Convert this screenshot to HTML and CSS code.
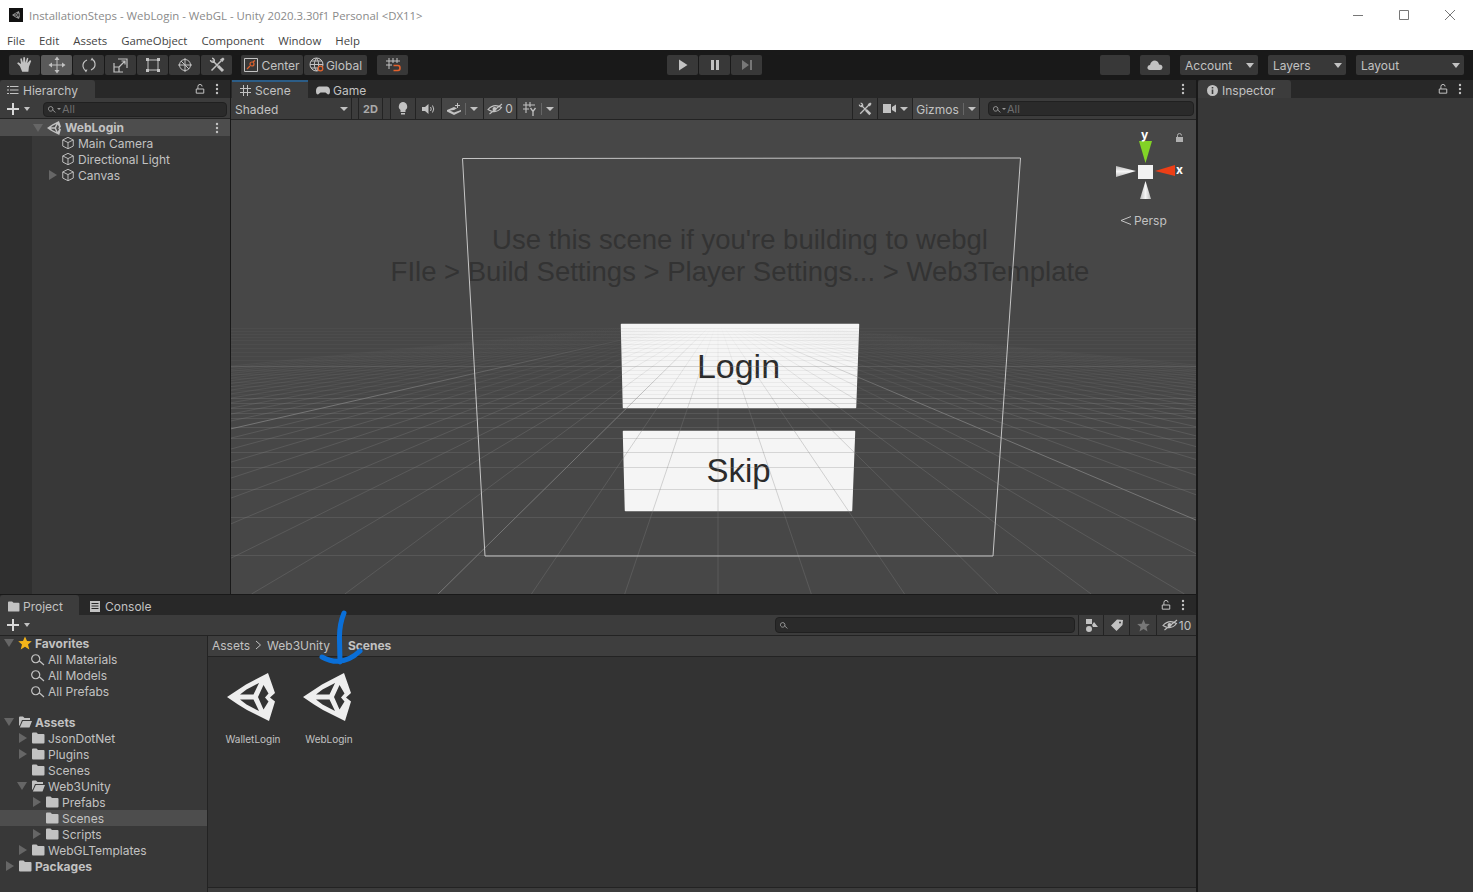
FILE: index.html
```html
<!DOCTYPE html>
<html lang="en">
<head>
  <meta charset="UTF-8" />
  <title>InstallationSteps - WebLogin - WebGL - Unity 2020.3.30f1 Personal</title>
  <link rel="stylesheet" href="styles.css">
</head>
<body>

  <!-- shared icons -->
  <svg class="defs" width="0" height="0">
    <symbol id="i-unity" viewBox="0 0 48 48">
      <path fill-rule="evenodd" d="M0 24 19 11.500 41 0 48 20 43 24.500 48 28.500 42 48 20 37 11 31.500ZM13 21.500 19.500 16.500 32 10 26.500 21.500ZM36.500 12 41.500 20.500 38 24.500 41.500 28.500 36.500 36.500 31 24ZM13 26.500H26.500L32 38 19.500 31.500Z"/>
    </symbol>
    <symbol id="i-cube" viewBox="0 0 16 16">
      <path fill="none" stroke="currentColor" stroke-width="1.100" d="M8 1.500 14 4.500V11.500L8 14.500 2 11.500V4.500ZM2 4.500 8 7.500 14 4.500M8 7.500V14.500"/>
    </symbol>
    <symbol id="i-folder" viewBox="0 0 14 12">
      <path d="M1 1.500Q1 .5 2 .5H5.500L7 2H12.500Q13.500 2 13.500 3V10.500Q13.500 11.500 12.500 11.500H2Q1 11.500 1 10.500Z"/>
    </symbol>
    <symbol id="i-folder-open" viewBox="0 0 14 12">
      <path d="M1 1.500Q1 .5 2 .5H5L6.500 2H12V4H4L1.800 9.500H1ZM4.800 5H14L11.500 11.500H1.800Z"/>
    </symbol>
    <symbol id="i-search" viewBox="0 0 14 14">
      <path fill="none" stroke="currentColor" stroke-width="1.200" d="M8.500 5.500A4 4 0 1 1 .9 5.500 4 4 0 0 1 8.500 5.500ZM7.700 8.300 13 13"/>
    </symbol>
    <symbol id="i-lock" viewBox="0 0 12 12">
      <path fill="none" stroke="currentColor" stroke-width="1.200" d="M1.500 6H10.500V11H1.500ZM3.500 6V3A2.500 2.500 0 0 1 8.500 3"/>
    </symbol>
    <symbol id="i-dots" viewBox="0 0 4 12">
      <circle cx="2" cy="2" r="1.200"/><circle cx="2" cy="6" r="1.200"/><circle cx="2" cy="10" r="1.200"/>
    </symbol>
    <symbol id="i-tools" viewBox="0 0 16 16">
      <path fill="none" stroke="currentColor" stroke-width="1.500" d="M3.500 3.500 9 9M12.500 3.500 2.500 13.500"/>
      <path fill="none" stroke="currentColor" stroke-width="3" d="M9 9 14 14"/>
      <path fill="none" stroke="currentColor" stroke-width="1.500" d="M1.500 3A2.500 2.500 0 0 0 5 5M3 1.200A2.500 2.500 0 0 1 5 5"/>
      <path d="M11 2.500 14 .5 15.500 2 13.500 5Z"/>
    </symbol>
    <symbol id="i-eye" viewBox="0 0 16 12">
      <path fill="none" stroke="currentColor" stroke-width="1.100" d="M1 6.500Q7 0 14.500 4.500 9 11.500 1 6.500ZM2.500 11 15 1"/>
      <circle cx="7.500" cy="6" r="2"/>
    </symbol>
    <symbol id="i-plus" viewBox="0 0 12 12">
      <path d="M5 0H7V5H12V7H7V12H5V7H0V5H5Z"/>
    </symbol>
  </svg>

  <div class="app">
    <header class="titlebar">
      <span class="app-icon">
        <svg width="8" height="8"><use href="#i-unity"/></svg>
      </span>
      <span class="title-text">InstallationSteps - WebLogin - WebGL - Unity 2020.3.30f1 Personal &lt;DX11&gt;</span>
      <div class="win-buttons">
        <svg class="win-btn" width="12" height="12" viewBox="0 0 12 12"><path d="M1 6.500H11"/></svg>
        <svg class="win-btn" width="12" height="12" viewBox="0 0 12 12"><path d="M1.500 1.500H10.500V10.500H1.500Z"/></svg>
        <svg class="win-btn" width="12" height="12" viewBox="0 0 12 12"><path d="M1 1 11 11M11 1 1 11"/></svg>
      </div>
    </header>

    <nav class="menubar">
      <span>File</span><span>Edit</span><span>Assets</span><span>GameObject</span><span>Component</span><span>Window</span><span>Help</span>
    </nav>

    <div class="toolbar">
      <div class="tool-group tools-left">
        <button class="tbtn"><svg width="18" height="18" viewBox="0 0 16 16"><path d="M3.500 9 1 6.500 2 5.500 4.500 7 3.800 2.500 5 2 6.300 6 6.500 1 8 1 8.300 6 9.800 1.500 11 2 10 6.500 12.500 3.500 13.500 4.500 11.500 9.500 11 14H5.500Z"/></svg></button>
        <button class="tbtn active"><svg width="18" height="18" viewBox="0 0 18 18"><path fill="none" stroke="currentColor" d="M9 3V15M3 9H15"/><path d="M9 .5 11.500 4H6.500ZM9 17.500 6.500 14H11.500ZM.5 9 4 6.500V11.500ZM17.500 9 14 11.500V6.500Z"/></svg></button>
        <button class="tbtn"><svg width="16" height="16" viewBox="0 0 16 16"><path fill="none" stroke="currentColor" stroke-width="1.200" d="M6 3Q1.500 5 2 9.500 2.500 12.500 5 14M10 13Q14.500 11 14 6.500 13.500 3.500 11 2"/><path d="M11 .5 12.500 3 9.500 3.500ZM5 15.500 3.500 13 6.500 12.500Z"/></svg></button>
        <button class="tbtn"><svg width="15" height="15" viewBox="0 0 15 15"><path fill="none" stroke="currentColor" stroke-width="1.200" d="M1 5V14H10M5 1H14V10M1 14H6V9H1M6 9 12 3M8.500 3H12V6.500"/></svg></button>
        <button class="tbtn"><svg width="14" height="14" viewBox="0 0 14 14"><path fill="none" stroke="currentColor" d="M2 2H12V12H2Z"/><path d="M0 0H3V3H0ZM11 0H14V3H11ZM0 11H3V14H0ZM11 11H14V14H11Z"/></svg></button>
        <button class="tbtn"><svg width="16" height="16" viewBox="0 0 16 16"><path fill="none" stroke="currentColor" d="M13.500 8A5.500 5.500 0 1 1 2.500 8 5.500 5.500 0 0 1 13.500 8ZM8 1V15M1 8H15M4 4 12 12"/></svg></button>
        <button class="tbtn"><svg width="16" height="16"><use href="#i-tools"/></svg></button>
      </div>

      <div class="tool-group tools-pivot">
        <button class="tbtn wide center">
          <svg width="14" height="14" viewBox="0 0 14 14"><path fill="none" stroke="#c4c4c4" d="M.5.500H13.500V13.500H.5Z"/><path fill="none" stroke="#e2622d" stroke-width="1.200" d="M3 11 6 8M10 6A2 2 0 1 1 6 6 2 2 0 0 1 10 6ZM9 4 11 2.500"/></svg>
          Center
        </button>
        <button class="tbtn wide global">
          <svg width="16" height="16" viewBox="0 0 16 16"><path fill="none" stroke="#c4c4c4" d="M14 7.500A6.500 6.500 0 1 1 1 7.500 6.500 6.500 0 0 1 14 7.500ZM7.500 1Q3 7.500 7.500 14 12 7.500 7.500 1ZM1 7.500H14M2 4H13M2 11H13"/><circle cx="11.500" cy="11.500" r="2.300" fill="#383838" stroke="#e2622d" stroke-width="1.300"/></svg>
          Global
        </button>
      </div>

      <button class="tbtn snap"><svg width="16" height="16" viewBox="0 0 16 16"><path fill="none" stroke="#c4c4c4" d="M4 1V12M8 1V6M12 1V6M1 4H15M1 8H7"/><path fill="none" stroke="#e2622d" stroke-width="1.600" d="M8.500 8.500H13Q15 8.500 15 11 15 13.500 13 13.500H8.500"/></svg></button>

      <div class="tool-group tools-play">
        <button class="tbtn"><svg width="10" height="12" viewBox="0 0 10 12"><path d="M1 .5 9.500 6 1 11.500Z"/></svg></button>
        <button class="tbtn"><svg width="10" height="12" viewBox="0 0 10 12"><path d="M1 1H4V11H1ZM6 1H9V11H6Z"/></svg></button>
        <button class="tbtn dim"><svg width="12" height="12" viewBox="0 0 12 12"><path d="M1 1 8 6 1 11ZM9 1H11V11H9Z"/></svg></button>
      </div>

      <button class="tbtn blank"></button>
      <button class="tbtn cloud"><svg width="16" height="10" viewBox="0 0 16 10"><path d="M3 10Q0 9.500 .5 7 1 5 3 5 4 .5 8 .5 11.500 1 12 4.500 15.500 4.500 15.500 7.500 15 10 13 10Z"/></svg></button>
      <button class="tbtn drop drop-account">Account<i class="caret"></i></button>
      <button class="tbtn drop drop-layers">Layers<i class="caret"></i></button>
      <button class="tbtn drop drop-layout">Layout<i class="caret"></i></button>
    </div>

    <div class="workspace">
      <div class="main-col">
        <div class="upper">

          <section class="panel hierarchy">
            <div class="tabbar">
              <div class="tab tab-hierarchy">
                <svg class="tab-icon" width="12" height="10" viewBox="0 0 12 10"><path fill="none" stroke="currentColor" d="M3 1.500H11.500M3 5H11.500M3 8.500H11.500"/><path d="M0 1H2V2H0ZM0 4.500H2V5.500H0ZM0 8H2V9H0Z"/></svg>
                Hierarchy
              </div>
              <div class="tab-actions">
                <svg class="lock" width="10" height="10"><use href="#i-lock"/></svg>
                <svg class="dots" width="4" height="12"><use href="#i-dots"/></svg>
              </div>
            </div>
            <div class="subbar">
              <svg class="plus" width="12" height="12"><use href="#i-plus"/></svg><i class="caret"></i>
              <div class="searchbox hier-search">
                <svg width="8" height="8"><use href="#i-search"/></svg><i class="caret tiny"></i>
                <span class="placeholder">All</span>
              </div>
            </div>
            <div class="hier-tree">
              <div class="row scene-row">
                <i class="arrow down"></i>
                <svg class="row-icon unity-mini" width="14" height="14"><use href="#i-unity"/></svg>
                <b>WebLogin</b>
                <svg class="dots row-dots" width="4" height="12"><use href="#i-dots"/></svg>
              </div>
              <div class="row hier-child"><i class="arrow none"></i><svg class="row-icon" width="14" height="14"><use href="#i-cube"/></svg>Main Camera</div>
              <div class="row hier-child"><i class="arrow none"></i><svg class="row-icon" width="14" height="14"><use href="#i-cube"/></svg>Directional Light</div>
              <div class="row hier-child"><i class="arrow"></i><svg class="row-icon" width="14" height="14"><use href="#i-cube"/></svg>Canvas</div>
            </div>
          </section>

          <section class="panel scene">
            <div class="tabbar">
              <div class="tab tab-scene">
                <svg class="tab-icon" width="11" height="11" viewBox="0 0 11 11"><path fill="none" stroke="currentColor" d="M3.500 0V11M7.500 0V11M0 3.500H11M0 7.500H11"/></svg>
                Scene
              </div>
              <div class="tab tab-game">
                <svg class="tab-icon" width="14" height="9" viewBox="0 0 14 9"><path d="M3 .5H11Q14 1 14 5 14 8.500 12 8.500L9.500 6.500H4.500L2 8.500Q0 8.500 0 5 0 1 3 .5Z"/></svg>
                Game
              </div>
              <div class="tab-actions">
                <svg class="dots" width="4" height="12"><use href="#i-dots"/></svg>
              </div>
            </div>
            <div class="scene-bar">
              <div class="sb-item sb-shaded">Shaded<i class="caret"></i></div>
              <div class="sb-item sb-2d">2D</div>
              <div class="sb-item sb-light"><svg width="10" height="13" viewBox="0 0 10 13"><path d="M5 0A4.500 4.500 0 0 1 7.500 8V10H2.500V8A4.500 4.500 0 0 1 5 0ZM3 11H7V12.500H3Z"/></svg></div>
              <div class="sb-item sb-audio"><svg width="14" height="10" viewBox="0 0 14 10"><path d="M0 3H3L6.500 0V10L3 7H0Z"/><path fill="none" stroke="currentColor" d="M8.500 3Q10 5 8.500 7M10.500 1.500Q13 5 10.500 8.500"/></svg></div>
              <div class="sb-item sb-fx sb-on"><svg width="14" height="12" viewBox="0 0 14 12"><path d="M0 7 7 4 10 5.300 7 7 3 7.500 7 9.500 14 7V8.500L7 12 0 8.500ZM10 0H11V2H13V3H11V5H10V3H8V2H10Z"/></svg><span class="sb-sep"></span><i class="caret"></i></div>
              <div class="sb-item sb-eye sb-on"><svg width="16" height="12"><use href="#i-eye"/></svg>0</div>
              <div class="sb-item sb-gridbtn sb-on"><svg width="15" height="15" viewBox="0 0 15 15"><path fill="none" stroke="currentColor" stroke-width="1.100" d="M4 1V12M8 1V6M1 4H13M1 8H7"/><path fill="none" stroke="currentColor" stroke-width="1.300" d="M8.500 7 11 10.500 13.500 7M11 10.500V15"/></svg><span class="sb-sep"></span><i class="caret"></i></div>
              <div class="sb-spacer"></div>
              <div class="sb-item sb-tools"><svg width="14" height="14"><use href="#i-tools"/></svg></div>
              <div class="sb-item sb-cam"><svg width="13" height="9" viewBox="0 0 13 9"><path d="M0 0H8V9H0ZM9 3 13 .5V8.500L9 6Z"/></svg><i class="caret"></i></div>
              <div class="sb-item sb-gizmos">Gizmos<span class="sb-sep"></span><i class="caret"></i></div>
              <div class="searchbox scene-search">
                <svg width="8" height="8"><use href="#i-search"/></svg><i class="caret tiny"></i>
                <span class="placeholder">All</span>
              </div>
            </div>

            <div class="scene-view">
              <svg class="scene-canvas" width="965" height="474" viewBox="231 120 965 474">
                <defs>
                  <linearGradient id="fade" gradientUnits="userSpaceOnUse" x1="0" y1="326" x2="0" y2="420">
                    <stop offset="0" stop-color="#808080" stop-opacity="0"/>
                    <stop offset="1" stop-color="#808080" stop-opacity=".32"/>
                  </linearGradient>
                  <linearGradient id="fade-major" gradientUnits="userSpaceOnUse" x1="0" y1="326" x2="0" y2="400">
                    <stop offset="0" stop-color="#949494" stop-opacity="0"/>
                    <stop offset="1" stop-color="#949494" stop-opacity=".6"/>
                  </linearGradient>
                </defs>
                <!-- canvas buttons -->
                <path class="ui-btn" d="M621.500 324.500H858.500L855.500 407.500H623.500Z"/>
                <path class="ui-btn" d="M623.500 431.500H854.500L851.500 510.500H625.500Z"/>
                <text class="ui-note" x="740" y="249">Use this scene if you're building to webgl</text>
                <text class="ui-note" x="740" y="281">FIle &gt; Build Settings &gt; Player Settings... &gt; Web3Template</text>
                <text class="ui-btn-text login-text" x="738.500" y="378">Login</text>
                <text class="ui-btn-text" x="738.500" y="482">Skip</text>
                <g id="grid"></g>
                <path class="ui-frame" d="M462.500 158.500 1020.500 158 993 556 485 556Z"/>
              </svg>

              <!-- axis gizmo -->
              <svg class="gizmo" width="80" height="110" viewBox="1106 128 80 110">
                <defs>
                  <linearGradient id="cone-h" x1="0" x2="1" y1="0" y2="0"><stop offset="0" stop-color="#bbb"/><stop offset=".5" stop-color="#f6f6f6"/><stop offset="1" stop-color="#bbb"/></linearGradient>
                  <linearGradient id="cone-v" x1="0" x2="0" y1="0" y2="1"><stop offset="0" stop-color="#bbb"/><stop offset=".5" stop-color="#f6f6f6"/><stop offset="1" stop-color="#bbb"/></linearGradient>
                </defs>
                <path fill="#82d326" d="M1139 141H1152L1145.500 163Z"/>
                <path fill="#ec3f17" d="M1155 171 1175 165V176Z"/>
                <path fill="url(#cone-v)" d="M1116 166 1136 171 1116 177Z"/>
                <path fill="url(#cone-h)" d="M1145.500 181 1151 199H1140Z"/>
                <path fill="#f2f2f2" d="M1138 165H1153V179H1138Z"/>
                <text class="giz-label" x="1141" y="139">y</text>
                <text class="giz-label" x="1176" y="174">x</text>
                <path fill="#b0b0b0" d="M1176 137H1183V142H1176Z"/>
                <path fill="none" stroke="#b0b0b0" d="M1177.500 137V135.500A2 2 0 0 1 1181.500 135.500"/>
                <path fill="none" stroke="#c4c4c4" d="M1131 216.500 1121 220.500 1131 224.500"/>
                <text class="giz-persp" x="1134" y="225">Persp</text>
              </svg>
            </div>
          </section>
        </div>

        <section class="panel project">
          <div class="tabbar">
            <div class="tab tab-project">
              <svg class="tab-icon folder-icon" width="13" height="11"><use href="#i-folder"/></svg>
              Project
            </div>
            <div class="tab tab-console">
              <svg class="tab-icon" width="10" height="11" viewBox="0 0 10 11"><path fill-rule="evenodd" d="M0 0H10V11H0ZM1.500 2V3H8.500V2ZM1.500 4.500V5.500H8.500V4.500ZM1.500 7V8H8.500V7Z"/></svg>
              Console
            </div>
            <div class="tab-actions">
              <svg class="lock" width="10" height="10"><use href="#i-lock"/></svg>
              <svg class="dots" width="4" height="12"><use href="#i-dots"/></svg>
            </div>
          </div>
          <div class="subbar project-bar">
            <svg class="plus" width="12" height="12"><use href="#i-plus"/></svg><i class="caret"></i>
            <div class="sb-spacer"></div>
            <div class="searchbox project-search"><svg width="8" height="8"><use href="#i-search"/></svg></div>
            <div class="pb-btn pb-type"><svg width="13" height="13" viewBox="0 0 13 13"><path d="M1 0H7V5H1ZM4 7A3 3 0 1 1 4 13 3 3 0 0 1 4 7ZM9 3 13 8H8L7 6Z"/></svg></div>
            <div class="pb-btn pb-label"><svg width="12" height="12" viewBox="0 0 12 12"><path fill-rule="evenodd" d="M6 .5 12 1 11.500 6 5.500 12 0 6.500ZM9 2.500A1 1 0 1 0 9 4.500 1 1 0 0 0 9 2.500Z"/></svg></div>
            <div class="pb-btn pb-star dim"><svg width="13" height="13" viewBox="0 0 13 13"><path d="M6.500 .5 8.300 4.800 12.800 5.100 9.400 8 10.500 12.500 6.500 10 2.500 12.500 3.600 8 .2 5.100 4.700 4.800Z"/></svg></div>
            <div class="pb-btn pb-eye"><svg width="16" height="12"><use href="#i-eye"/></svg>10</div>
          </div>

          <div class="project-body">
            <div class="project-tree">
              <div class="row lvl-0"><i class="arrow down"></i><svg class="row-icon star" width="14" height="14" viewBox="0 0 14 14"><path d="M7 .5 9 5 13.800 5.300 10 8.500 11.300 13.500 7 10.800 2.700 13.500 4 8.500 .2 5.300 5 5Z"/></svg><b>Favorites</b></div>
              <div class="row lvl-1"><i class="arrow none"></i><svg class="row-icon" width="14" height="14"><use href="#i-search"/></svg>All Materials</div>
              <div class="row lvl-1"><i class="arrow none"></i><svg class="row-icon" width="14" height="14"><use href="#i-search"/></svg>All Models</div>
              <div class="row lvl-1"><i class="arrow none"></i><svg class="row-icon" width="14" height="14"><use href="#i-search"/></svg>All Prefabs</div>
              <div class="row-gap"></div>
              <div class="row lvl-0"><i class="arrow down"></i><svg class="row-icon" width="14" height="12"><use href="#i-folder-open"/></svg><b>Assets</b></div>
              <div class="row lvl-1"><i class="arrow"></i><svg class="row-icon" width="14" height="12"><use href="#i-folder"/></svg>JsonDotNet</div>
              <div class="row lvl-1"><i class="arrow"></i><svg class="row-icon" width="14" height="12"><use href="#i-folder"/></svg>Plugins</div>
              <div class="row lvl-1"><i class="arrow none"></i><svg class="row-icon" width="14" height="12"><use href="#i-folder"/></svg>Scenes</div>
              <div class="row lvl-1"><i class="arrow down"></i><svg class="row-icon" width="14" height="12"><use href="#i-folder-open"/></svg>Web3Unity</div>
              <div class="row lvl-2"><i class="arrow"></i><svg class="row-icon" width="14" height="12"><use href="#i-folder"/></svg>Prefabs</div>
              <div class="row lvl-2 selected"><i class="arrow none"></i><svg class="row-icon" width="14" height="12"><use href="#i-folder"/></svg>Scenes</div>
              <div class="row lvl-2"><i class="arrow"></i><svg class="row-icon" width="14" height="12"><use href="#i-folder"/></svg>Scripts</div>
              <div class="row lvl-1"><i class="arrow"></i><svg class="row-icon" width="14" height="12"><use href="#i-folder"/></svg>WebGLTemplates</div>
              <div class="row lvl-0"><i class="arrow"></i><svg class="row-icon" width="14" height="12"><use href="#i-folder"/></svg><b>Packages</b></div>
            </div>

            <div class="project-main">
              <div class="breadcrumb">
                <span>Assets</span>
                <svg width="7" height="10" viewBox="0 0 7 10"><path fill="none" stroke="currentColor" d="M1 1 5.500 5 1 9"/></svg>
                <span>Web3Unity</span>
                <b>Scenes</b>
              </div>
              <div class="asset-grid">
                <div class="asset">
                  <svg width="48" height="48"><use href="#i-unity"/></svg>
                  <span>WalletLogin</span>
                </div>
                <div class="asset">
                  <svg width="48" height="48"><use href="#i-unity"/></svg>
                  <span>WebLogin</span>
                </div>
              </div>
              <div class="project-foot"></div>
            </div>
          </div>
        </section>
      </div>

      <section class="panel inspector">
        <div class="tabbar">
          <div class="tab tab-inspector">
            <svg class="tab-icon" width="11" height="11" viewBox="0 0 11 11"><path fill-rule="evenodd" d="M5.500 0A5.500 5.500 0 1 1 5.500 11 5.500 5.500 0 0 1 5.500 0ZM4.700 2V3.500H6.300V2ZM4.700 4.500V9H6.300V4.500Z"/></svg>
            Inspector
          </div>
          <div class="tab-actions">
            <svg class="lock" width="10" height="10"><use href="#i-lock"/></svg>
            <svg class="dots" width="4" height="12"><use href="#i-dots"/></svg>
          </div>
        </div>
      </section>
    </div>
  </div>

  <!-- blue marker drawn on the screenshot -->
  <svg class="marker" width="60" height="60" viewBox="310 610 60 60">
    <path d="M344 613Q339 625 339.500 640L340 662M322 657Q342 668 360 651"/>
  </svg>

  <script>
    // ground grid of the scene view: lines run to one vanishing point
    const grid = document.getElementById("grid");
    const vpX = 718, vpY = 318, step = 0.338, bottom = 594, top0 = 328;
    let lines = "";

    for (let k = -30; k <= 30; k++) {
      const major = k === -13 || k === -3 || k === 7;
      const x1 = vpX + k * step * (top0 - vpY);
      const x2 = vpX + k * step * (bottom - vpY);
      lines += `<line stroke="url(#${major ? "fade-major" : "fade"})" x1="${x1}" y1="${top0}" x2="${x2}" y2="${bottom}"/>`;
    }

    const faint = [328,331,334,337,340,344,348,352,356,360,370,374,378,382,386,390,394];
    const minor = [403,408,413,418,427,438,452,467,489,517,555];
    const strong = [366,398];
    faint.forEach(y => { lines += `<line class="g-faint" x1="231" y1="${y}.5" x2="1196" y2="${y}.5"/>`; });
    minor.forEach(y => { lines += `<line class="g-minor" x1="231" y1="${y}.5" x2="1196" y2="${y}.5"/>`; });
    strong.forEach(y => { lines += `<line class="g-major" x1="231" y1="${y}.5" x2="1196" y2="${y}.5"/>`; });

    grid.innerHTML = lines;
  </script>

</body>
</html>
```

FILE: styles.css
```css
* {
  box-sizing: border-box;
}

body {
  margin: 0;
  width: 1475px;
  height: 892px;
  overflow: hidden;
  position: relative;
  background-color: #fff;
  font-family: 'Inter', 'Liberation Sans', sans-serif;
  font-size: 12px;
  color: #c2c2c2;
}

svg {
  fill: currentColor;
  flex: none;
  display: block;
}

.defs {
  position: absolute;
}

b {
  font-weight: 700;
}

.app {
  width: 1473px;
  height: 892px;
  display: flex;
  flex-direction: column;
}

/* window chrome */
.titlebar {
  height: 33px;
  display: flex;
  align-items: center;
  padding: 0 0 3px 9px;
  background-color: #fff;
}

.app-icon {
  width: 14px;
  height: 14px;
  margin-right: 6px;
  display: flex;
  align-items: center;
  justify-content: center;
  background-color: #111;
  color: #999;
}

.title-text {
  font-family: 'Open Sans', sans-serif;
  font-size: 11.400px;
  color: #8a8a8a;
}

.win-buttons {
  margin-left: auto;
  margin-right: 17px;
  display: flex;
  gap: 34px;
}

.win-btn {
  fill: none;
  stroke: #777;
}

.menubar {
  height: 17px;
  display: flex;
  gap: 14px;
  padding: 0 0 2px 7px;
  align-items: center;
  background-color: #fff;
  font-family: 'Open Sans', sans-serif;
  font-size: 11.400px;
  color: #444;
}

/* main toolbar */
.toolbar {
  height: 30px;
  padding: 5px 0 5px 9px;
  display: flex;
  background-color: #191919;
}

.tool-group {
  display: flex;
  gap: 1px;
}

.tbtn {
  width: 31px;
  height: 20px;
  padding: 0;
  border: 0;
  border-radius: 2px;
  display: flex;
  align-items: center;
  justify-content: center;
  background-color: #383838;
  color: #c2c2c2;
  font: inherit;
  font-size: 12px;
}

.tbtn.active {
  background-color: #5a5a5a;
}

.tbtn.dim {
  color: #777;
}

.tools-pivot {
  margin-left: 9px;
}

.tbtn.wide {
  width: 62px;
  gap: 3px;
}

.tbtn.global {
  width: 63px;
  gap: 1px;
}

.snap {
  margin-left: 10px;
}

.tools-play {
  margin-left: 259px;
}

.blank {
  margin-left: 338px;
  width: 30px;
}

.cloud {
  margin-left: 10px;
  width: 30px;
}

.drop {
  margin-left: 10px;
  justify-content: flex-start;
  padding-left: 5px;
  position: relative;
}

.drop .caret {
  position: absolute;
  right: 4px;
  top: 8px;
}

.drop-account,
.drop-layers {
  width: 78px;
}

.drop-layout {
  width: 108px;
}

.caret {
  display: block;
  flex: none;
  width: 0;
  height: 0;
  border-left: 4px solid transparent;
  border-right: 4px solid transparent;
  border-top: 5px solid #c2c2c2;
}

.caret.tiny {
  border-width: 2px 2px 0;
  border-top-color: #999;
  margin-left: 1px;
}

/* panels */
.workspace {
  flex: 1;
  min-height: 0;
  display: flex;
  gap: 2px;
  background-color: #191919;
}

.main-col {
  width: 1196px;
  display: flex;
  flex-direction: column;
  gap: 1px;
}

.upper {
  height: 514px;
  display: flex;
  gap: 1px;
}

.panel {
  display: flex;
  flex-direction: column;
  background-color: #383838;
  min-width: 0;
}

.hierarchy {
  width: 230px;
}

.scene {
  width: 965px;
}

.project {
  flex: 1;
  min-height: 0;
}

.inspector {
  flex: 1;
}

.tabbar {
  height: 18px;
  flex: none;
  display: flex;
  background-color: #282828;
  padding-right: 11px;
}

.tab {
  height: 100%;
  display: flex;
  align-items: center;
  gap: 5px;
  padding-top: 2px;
  background-color: #3c3c3c;
  border-radius: 3px 3px 0 0;
}

.tab-icon {
  color: #c2c2c2;
}

.tab-hierarchy {
  width: 95px;
  padding-left: 7px;
  gap: 4px;
}

.tab-scene {
  width: 76px;
  margin-left: 1px;
  padding-left: 8px;
  padding-top: 0;
  gap: 4px;
  border-top: 2px solid #2c5d87;
  border-radius: 0;
}

.tab-game {
  padding-left: 8px;
  background: none;
  gap: 3px;
}

.tab-project {
  width: 79px;
  padding-left: 7px;
  gap: 3px;
}

.tab-console {
  padding-left: 11px;
  background: none;
}

.tab-inspector {
  width: 93px;
  padding-left: 9px;
  gap: 4px;
}

.tab-actions {
  margin-left: auto;
  display: flex;
  align-items: center;
  gap: 10px;
}

.lock {
  color: #c2c2c2;
}

/* narrow tool rows */
.subbar {
  height: 21px;
  flex: none;
  display: flex;
  align-items: center;
  background-color: #3c3c3c;
  border-bottom: 1px solid #232323;
  padding-left: 7px;
}

.hierarchy .subbar {
  padding-top: 2px;
}

.plus {
  margin-right: 5px;
  color: #d8d8d8;
}

.subbar > .caret {
  border-width: 4px 3px 0;
}

.searchbox {
  height: 15px;
  display: flex;
  align-items: center;
  padding-left: 4px;
  border-radius: 4px;
  background-color: #2a2a2a;
  border: 1px solid #202020;
}

.placeholder {
  margin-left: 1px;
  font-size: 11px;
  color: #6e6e6e;
}

.hier-search {
  width: 184px;
  margin-left: 13px;
}

.scene-search {
  width: 206px;
  margin-left: 8px;
}

.project-search {
  width: 300px;
  height: 16px;
}

/* tree rows */
.hier-tree {
  flex: 1;
  background: linear-gradient(to right, #2f2f2f 32px, #383838 32px);
}

.row {
  height: 16px;
  display: flex;
  align-items: center;
  gap: 3px;
  white-space: nowrap;
}

.row-icon {
  color: #c2c2c2;
}

.arrow {
  flex: none;
  width: 8px;
  height: 0;
  border-left: 8px solid #666;
  border-top: 5px solid transparent;
  border-bottom: 5px solid transparent;
  border-right: 0;
  margin-left: 2px;
  margin-right: 1px;
}

.arrow.down {
  width: 10px;
  border-left: 5px solid transparent;
  border-right: 5px solid transparent;
  border-top: 8px solid #666;
  border-bottom: 0;
  margin-left: 0;
  margin-right: 1px;
}

.arrow.none {
  border: 0;
}

.scene-row {
  height: 17px;
  padding-left: 33px;
  background-color: #4d4d4d;
  margin-bottom: -1px;
}

.unity-mini {
  margin-right: 1px;
}

.row-dots {
  margin-left: auto;
  margin-right: 11px;
}

.hier-child {
  padding-left: 47px;
}

.lvl-0 {
  padding-left: 4px;
}

.lvl-1 {
  padding-left: 17px;
}

.lvl-2 {
  padding-left: 31px;
}

.selected {
  background-color: #4d4d4d;
}

.row-gap {
  height: 15px;
}

.star {
  color: #f4b41a;
}

/* scene view */
.scene-bar {
  height: 22px;
  flex: none;
  display: flex;
  align-items: stretch;
  background-color: #3c3c3c;
  border-bottom: 1px solid #232323;
}

.sb-item {
  display: flex;
  align-items: center;
  justify-content: center;
  gap: 4px;
  border-right: 1px solid #232323;
  color: #c2c2c2;
}

.sb-on {
  background-color: #464646;
}

.sb-sep {
  width: 1px;
  height: 12px;
  background-color: #666;
}

.sb-item .caret {
  border-width: 4px 4px 0;
}

.sb-shaded {
  width: 121px;
  padding: 1px 3px 0 4px;
  justify-content: space-between;
  font-size: 12px;
}

.sb-2d {
  width: 25px;
  margin-left: 6px;
  border-left: 1px solid #232323;
  font-size: 11px;
  font-weight: 700;
  color: #aaa;
}

.sb-light {
  width: 26px;
  margin-left: 7px;
  border-left: 1px solid #232323;
}

.sb-audio {
  width: 26px;
}

.sb-fx {
  width: 42px;
}

.sb-eye {
  width: 33px;
  gap: 2px;
}

.sb-gridbtn {
  width: 41px;
  margin-left: 1px;
}

.sb-spacer {
  flex: 1;
}

.sb-tools {
  width: 26px;
  border-left: 1px solid #232323;
}

.sb-cam {
  width: 35px;
}

.sb-gizmos {
  width: 67px;
  padding-top: 1px;
  font-size: 12px;
  background-color: #464646;
}

.scene-search {
  align-self: center;
  margin-right: 2px;
}

.scene-view {
  flex: 1;
  position: relative;
  background-color: #474747;
  overflow: hidden;
}

.scene-canvas {
  position: absolute;
  left: 0;
  top: 0;
}

.ui-btn {
  fill: #f5f5f5;
  stroke: #f5f5f5;
  stroke-width: 1.500;
  stroke-linejoin: round;
}

.ui-note {
  fill: #333;
  font-family: 'Liberation Sans', sans-serif;
  font-size: 27.500px;
  text-anchor: middle;
}

.ui-btn-text {
  fill: #2b2b2b;
  font-family: 'Liberation Sans', sans-serif;
  font-size: 33px;
  text-anchor: middle;
}

.login-text {
  font-size: 34px;
}

.ui-frame {
  fill: none;
  stroke: #c6c6c6;
  stroke-width: 1;
}

.g-faint {
  stroke: #808080;
  stroke-opacity: 0.1;
}

.g-minor {
  stroke: #808080;
  stroke-opacity: 0.28;
}

.g-major {
  stroke: #808080;
  stroke-opacity: 0.32;
}

.gizmo {
  position: absolute;
  left: 875px;
  top: 8px;
}

.giz-label {
  fill: #fff;
  font-size: 12px;
  font-weight: 700;
}

.giz-persp {
  fill: #c2c2c2;
  font-size: 12px;
}

/* project browser */
.project .tabbar {
  height: 20px;
}

.project-bar {
  height: 21px;
}

.pb-btn {
  height: 100%;
  display: flex;
  align-items: center;
  justify-content: center;
  gap: 1px;
  border-left: 1px solid #232323;
  color: #c2c2c2;
}

.pb-type {
  width: 25px;
  margin-left: 3px;
}

.pb-label {
  width: 26px;
}

.pb-star {
  width: 27px;
}

.pb-btn.dim {
  color: #777;
}

.pb-eye {
  width: 40px;
}

.project-body {
  flex: 1;
  min-height: 0;
  display: flex;
}

.project-tree {
  width: 207px;
  flex: none;
  margin-top: -1px;
}

.project-main {
  flex: 1;
  display: flex;
  flex-direction: column;
  background-color: #333;
  border-left: 1px solid #232323;
}

.breadcrumb {
  height: 21px;
  flex: none;
  display: flex;
  align-items: center;
  gap: 5px;
  padding: 0 0 2px 4px;
  background-color: #3e3e3e;
  border-bottom: 1px solid #232323;
}

.breadcrumb b {
  margin-left: 13px;
}

.asset-grid {
  flex: 1;
  display: flex;
  padding: 16px 0 0 7px;
}

.asset {
  width: 76px;
  display: flex;
  flex-direction: column;
  align-items: center;
  gap: 12px;
  color: #eee;
}

.asset svg {
  margin-right: 4px;
}

.asset span {
  font-size: 10px;
  color: #c2c2c2;
}

.project-foot {
  height: 5px;
  background-color: #3c3c3c;
  border-top: 1px solid #232323;
}

/* hand drawn arrow over the browser */
.marker {
  position: absolute;
  left: 310px;
  top: 610px;
  fill: none;
}

.marker path {
  fill: none;
  stroke: #0a6fd8;
  stroke-width: 5;
  stroke-linecap: round;
}
```
